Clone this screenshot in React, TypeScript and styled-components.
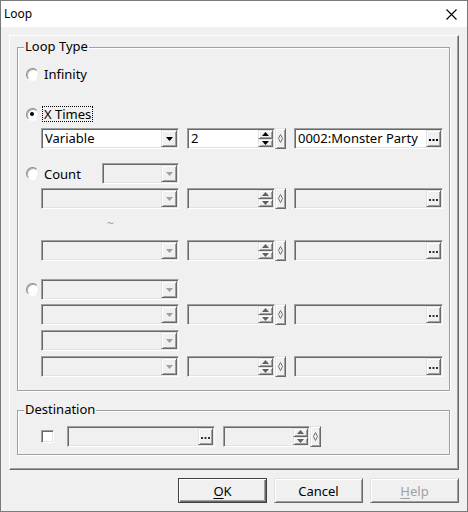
import styled, {createGlobalStyle} from "styled-components";

const GlobalStyle = createGlobalStyle`
  html, body {
    margin: 0;
    padding: 0;
    background: #f0f0f0;
  }
`

const FONT = `"Noto Sans", "DejaVu Sans", sans-serif`

// classic 3d edges
const sunken = `
  box-sizing: border-box;
  border: 1px solid;
  border-color: #a0a0a0 #ffffff #ffffff #a0a0a0;
  box-shadow: inset 1px 1px 0 #696969, inset -1px -1px 0 #e3e3e3;
`
const raised = `
  box-sizing: border-box;
  border: 1px solid;
  border-color: #e3e3e3 #696969 #696969 #e3e3e3;
  box-shadow: inset 1px 1px 0 #ffffff, inset -1px -1px 0 #a0a0a0;
  background: #f0f0f0;
`

const Arrow = ({up, color, w = 7}: { up?: boolean, color: string, w?: number }) => {
    const h = Math.ceil(w / 2)
    return (
        <svg width={w} height={h} viewBox={`0 0 ${w} ${h}`}>
            <polygon points={up ? `0,${h} ${w},${h} ${w / 2},0` : `0,0 ${w},0 ${w / 2},${h}`} fill={color}/>
        </svg>
    )
}

const Dots = ({color}: { color: string }) => (
    <svg width="9" height="2" viewBox="0 0 9 2">
        <rect x="0" y="0" width="2" height="2" fill={color}/>
        <rect x="3.5" y="0" width="2" height="2" fill={color}/>
        <rect x="7" y="0" width="2" height="2" fill={color}/>
    </svg>
)

const Diamond = () => (
    <svg width="5" height="9" viewBox="0 0 5 9">
        <polygon points="2.5,0.5 4.5,4.5 2.5,8.5 0.5,4.5" fill="none" stroke="#707070" strokeWidth="1"/>
    </svg>
)

export default function App() {
    return (
        <>
            <GlobalStyle/>
            <Window>
                <TitleBar>
                    <Title>Loop</Title>
                    <svg width="11" height="11" viewBox="0 0 11 11">
                        <path d="M0.5 0.5 L10.5 10.5 M10.5 0.5 L0.5 10.5" stroke="#000" strokeWidth="1.1"/>
                    </svg>
                </TitleBar>
                <Body>
                    <Panel>
                        <Group $height={344}>
                            <Legend>Loop Type</Legend>
                            <RadioLine $mt={16}>
                                <Radio/>
                                <RadioLabel>Infinity</RadioLabel>
                            </RadioLine>
                            <RadioLine $mt={20}>
                                <Radio $checked/>
                                <RadioLabel $focused>X Times</RadioLabel>
                            </RadioLine>
                            <FieldRow $mt={4}>
                                <Combo $enabled value="Variable"/>
                                <Spin $enabled value="2"/>
                                <Browse $enabled value="0002:Monster Party"/>
                            </FieldRow>
                            <RadioLine $mt={14} $height={21}>
                                <Radio/>
                                <RadioLabel $width={61}>Count</RadioLabel>
                                <Combo width={77}/>
                            </RadioLine>
                            <FieldRow $mt={4}>
                                <Combo/>
                                <Spin/>
                                <Browse/>
                            </FieldRow>
                            <Tilde>~</Tilde>
                            <FieldRow>
                                <Combo/>
                                <Spin/>
                                <Browse/>
                            </FieldRow>
                            <RadioLine $mt={18} $height={21}>
                                <Radio/>
                                <Combo/>
                            </RadioLine>
                            <FieldRow $mt={4}>
                                <Combo/>
                                <Spin/>
                                <Browse/>
                            </FieldRow>
                            <FieldRow $mt={5}>
                                <Combo/>
                            </FieldRow>
                            <FieldRow $mt={5}>
                                <Combo/>
                                <Spin/>
                                <Browse/>
                            </FieldRow>
                        </Group>
                        <Group $height={45} $mt={19}>
                            <Legend>Destination</Legend>
                            <DestRow>
                                <CheckBox/>
                                <Browse width={148}/>
                                <Spin width={87}/>
                            </DestRow>
                        </Group>
                    </Panel>
                    <Buttons>
                        <DialogButton $default><u>O</u>K</DialogButton>
                        <DialogButton>Cancel</DialogButton>
                        <DialogButton disabled><u>H</u>elp</DialogButton>
                    </Buttons>
                </Body>
            </Window>
        </>
    )
}

type FieldProps = { $enabled?: boolean, value?: string, width?: number }

const Combo = ({$enabled, value, width = 138}: FieldProps) => (
    <Edit $enabled={$enabled} style={{width}}>
        <EditText>{value}</EditText>
        <DropButton>
            <Arrow color={$enabled ? "#000" : "#a0a0a0"}/>
        </DropButton>
    </Edit>
)

const Spin = ({$enabled, value, width = 88}: FieldProps) => (
    <SpinBox>
        <Edit $enabled={$enabled} style={{width}}>
            <EditText>{value}</EditText>
            <SpinButtons>
                <SpinHalf><Arrow up w={7} color={$enabled ? "#000" : "#606060"}/></SpinHalf>
                <SpinHalf><Arrow w={7} color={$enabled ? "#000" : "#606060"}/></SpinHalf>
            </SpinButtons>
        </Edit>
        <DiamondButton><Diamond/></DiamondButton>
    </SpinBox>
)

const Browse = ({$enabled, value, width = 149}: FieldProps) => (
    <Edit $enabled={$enabled} style={{width}}>
        <EditText>{value}</EditText>
        <DotButton><Dots color={$enabled ? "#000" : "#333"}/></DotButton>
    </Edit>
)

const Window = styled.div`
  width: 468px;
  height: 512px;
  box-sizing: border-box;
  border: 1px solid #7a7a7a;
  background: #f0f0f0;
  display: flex;
  flex-direction: column;
  font-family: ${FONT};
  font-size: 13px;
  color: #000;
`

const TitleBar = styled.div`
  height: 26px;
  flex-shrink: 0;
  background: #fff;
  display: flex;
  align-items: center;
  justify-content: space-between;
  padding: 0 10px 0 3px;
`

const Title = styled.span`
  font-size: 12px;
  padding-bottom: 1px;
`

const Body = styled.div`
  flex: 1;
  display: flex;
  flex-direction: column;
  padding: 8px 8px 0 8px;
`

const Panel = styled.div`
  box-sizing: border-box;
  width: 450px;
  height: 435px;
  border: 1px solid;
  border-color: #fff #696969 #696969 #fff;
  box-shadow: inset -1px -1px 0 #a0a0a0;
  padding: 11px 0 0 7px;
  display: flex;
  flex-direction: column;
`

const Group = styled.div<{ $height: number, $mt?: number }>`
  position: relative;
  box-sizing: border-box;
  width: 433px;
  height: ${p => p.$height}px;
  margin-top: ${p => p.$mt || 0}px;
  border: 1px solid #a0a0a0;
  box-shadow: inset 1px 1px 0 #fff, 1px 1px 0 #fff;
  display: flex;
  flex-direction: column;
  padding-left: 23px;
`

const Legend = styled.span`
  position: absolute;
  top: -10px;
  left: 6px;
  padding: 0 1px;
  background: #f0f0f0;
  line-height: 17px;
`

const RadioLine = styled.div<{ $mt?: number, $height?: number }>`
  display: flex;
  align-items: center;
  height: ${p => p.$height || 20}px;
  margin-top: ${p => p.$mt || 0}px;
  margin-left: -15px;
`

const Radio = styled.span<{ $checked?: boolean }>`
  position: relative;
  box-sizing: border-box;
  width: 13px;
  height: 13px;
  border-radius: 50%;
  border: 1px solid;
  border-color: #8a8a8a #e6e6e6 #fff #8a8a8a;
  box-shadow: inset 1px 1px 0 #b0b0b0;
  background: #fff;
  margin-right: 2px;
  flex-shrink: 0;

  &::after {
    content: "";
    display: ${p => p.$checked ? "block" : "none"};
    position: absolute;
    left: 3px;
    top: 3px;
    width: 4px;
    height: 4px;
    border-radius: 50%;
    background: #000;
  }
`

const RadioLabel = styled.span<{ $focused?: boolean, $width?: number }>`
  box-sizing: border-box;
  line-height: 14px;
  padding: 0 1px;
  border: 1px ${p => p.$focused ? "dotted #000" : "solid transparent"};
  margin-left: 1px;
  ${p => p.$width ? `width: ${p.$width}px; margin-left: 0; padding-left: 2px;` : ""}
`

const FieldRow = styled.div<{ $mt?: number }>`
  display: flex;
  align-items: center;
  gap: 8px;
  height: 21px;
  margin-top: ${p => p.$mt || 0}px;
`

const Tilde = styled.div`
  height: 31px;
  line-height: 29px;
  padding-left: 66px;
  color: #a0a0a0;
  font-size: 12px;
`

const Edit = styled.div<{ $enabled?: boolean }>`
  ${sunken};
  height: 21px;
  display: flex;
  align-items: stretch;
  padding: 1px;
  background: ${p => p.$enabled ? "#fff" : "#f0f0f0"};
  flex-shrink: 0;
`

const EditText = styled.span`
  flex: 1;
  padding-left: 2px;
  line-height: 17px;
  white-space: nowrap;
  overflow: hidden;
`

const DropButton = styled.span`
  ${raised};
  width: 16px;
  display: flex;
  align-items: center;
  justify-content: center;
`

const SpinBox = styled.div`
  display: flex;
  align-items: stretch;
  height: 21px;
`

const SpinButtons = styled.span`
  width: 15px;
  display: flex;
  flex-direction: column;
`

const SpinHalf = styled.span`
  ${raised};
  flex: 1;
  display: flex;
  align-items: center;
  justify-content: center;
`

const DiamondButton = styled.span`
  ${raised};
  width: 11px;
  display: flex;
  align-items: center;
  justify-content: center;
`

const DotButton = styled.span`
  ${raised};
  width: 15px;
  display: flex;
  align-items: center;
  justify-content: center;
  padding-top: 3px;
`

const DestRow = styled.div`
  display: flex;
  align-items: center;
  height: 21px;
  margin-top: 15px;
  gap: 8px;

  & > :first-child {
    margin-right: 5px;
  }
`

const CheckBox = styled.span`
  ${sunken};
  width: 13px;
  height: 13px;
  background: #fff;
  flex-shrink: 0;
`

const Buttons = styled.div`
  display: flex;
  justify-content: flex-end;
  gap: 7px;
  margin-top: 8px;
`

const DialogButton = styled.button<{ $default?: boolean }>`
  ${raised};
  width: 89px;
  height: 25px;
  padding: 0;
  font-family: ${FONT};
  font-size: 13px;
  color: #000;
  ${p => p.$default && `
    border: 1px solid #404040;
    box-shadow: inset 1px 1px 0 #fff, inset -1px -1px 0 #696969, inset -2px -2px 0 #a0a0a0;
  `}
  &:disabled {
    color: #a0a0a0;
  }

  u {
    text-decoration-thickness: 1px;
    text-underline-offset: 2px;
  }
`
